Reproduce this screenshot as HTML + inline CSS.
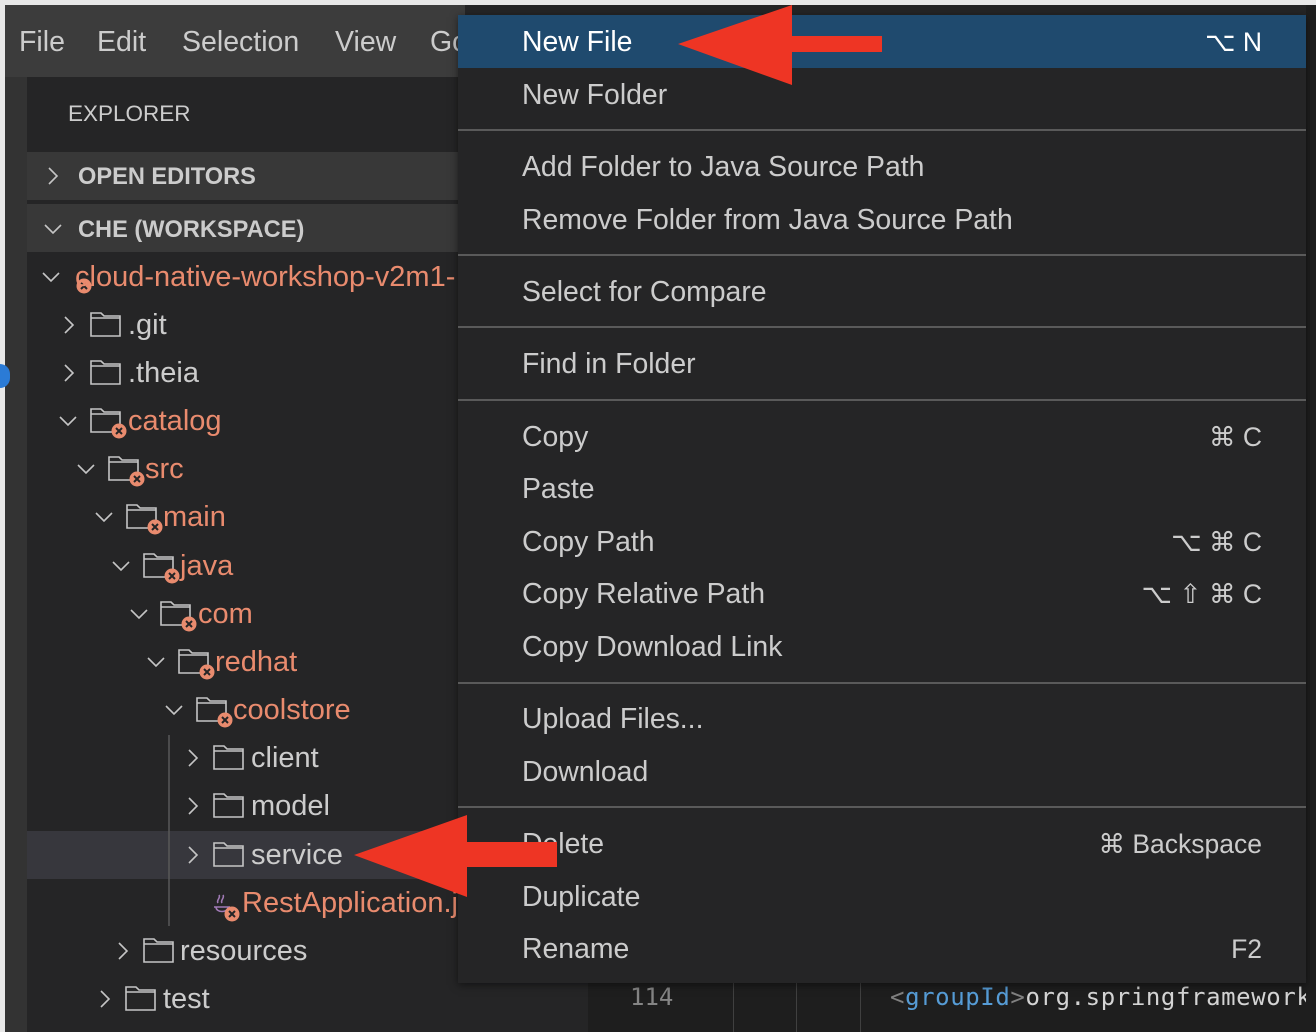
<!DOCTYPE html>
<html><head><meta charset="utf-8"><style>
*{margin:0;padding:0;box-sizing:border-box}
body{width:1316px;height:1032px;overflow:hidden;background:#e8e8e8;position:relative;font-family:"Liberation Sans","DejaVu Sans",sans-serif}
.a{position:absolute}
.t{position:absolute;font-size:29px;line-height:32px;white-space:nowrap;color:#cccccc;margin-top:1px}
.o{color:#e98b6e}
.mi{position:absolute;left:522px;font-size:28.4px;line-height:32px;color:#cccccc;white-space:nowrap;margin-top:1px}
.sc{position:absolute;right:54px;font-size:26.5px;line-height:32px;color:#cccccc;white-space:nowrap;font-family:"Liberation Sans","DejaVu Sans",sans-serif;margin-top:1px}
.sep{position:absolute;left:458px;width:848px;height:2px;background:#5a5a5a}
</style></head><body>
<div class="a" style="left:5px;top:5px;width:1311px;height:1027px;background:#252526"></div>
<div class="a" style="left:5px;top:5px;width:460px;height:72px;background:#3c3c3c"></div>
<div class="t" style="left:19px;top:25px;font-size:28.5px">File</div>
<div class="t" style="left:97px;top:25px;font-size:28.5px">Edit</div>
<div class="t" style="left:182px;top:25px;font-size:28.5px">Selection</div>
<div class="t" style="left:335px;top:25px;font-size:28.5px">View</div>
<div class="t" style="left:430px;top:25px;font-size:28.5px">Go</div>
<div class="a" style="left:5px;top:77px;width:22px;height:955px;background:#333333"></div>
<div class="a" style="left:0px;top:364px;width:10px;height:24px;border-radius:0 12px 12px 0;background:#2b7bd6"></div>
<div class="t" style="left:68px;top:97px;font-size:22.5px;">EXPLORER</div>
<div class="a" style="left:27px;top:152px;width:440px;height:48px;background:#383838"></div>
<div class="a" style="left:27px;top:204px;width:440px;height:48px;background:#383838"></div>
<div class="t" style="left:78px;top:160px;font-size:23.6px;font-weight:bold;">OPEN EDITORS</div>
<div class="t" style="left:78px;top:213px;font-size:23.6px;font-weight:bold;">CHE (WORKSPACE)</div>
<svg class="a" style="left:0;top:0" width="470" height="1032">
<defs>
<g id="fold"><path d="M1 1h10l3 3h16v20H1z M1 6h29" fill="none" stroke="#c5c5c5" stroke-width="1.6"/></g>
<g id="cr"><path d="M1 1l8 8-8 8" fill="none" stroke="#c5c5c5" stroke-width="1.6"/></g>
<g id="cd"><path d="M1 1l8 8 8-8" fill="none" stroke="#c5c5c5" stroke-width="1.6"/></g>
<g id="bd"><circle r="7.5" fill="#e98b6e"/><path d="M-3-3l6 6M3-3l-6 6" stroke="#252526" stroke-width="2"/></g>
</defs>
<use href="#cr" x="48" y="167"/>
<use href="#cd" x="44" y="224"/>
<rect x="27" y="831" width="440" height="48" fill="#37373d"/>
<line x1="169" y1="735" x2="169" y2="926" stroke="#585858" stroke-width="1.5"/>
<use href="#cd" x="42" y="272"/><use href="#bd" x="84" y="286"/>
<use href="#cr" x="64" y="316"/><use href="#fold" x="90" y="312"/>
<use href="#cr" x="64" y="364"/><use href="#fold" x="90" y="360"/>
<use href="#cd" x="59" y="416"/><use href="#fold" x="90" y="408"/><use href="#bd" x="119" y="431"/>
<use href="#cd" x="77" y="464"/><use href="#fold" x="108" y="456"/><use href="#bd" x="137" y="479"/>
<use href="#cd" x="95" y="512"/><use href="#fold" x="126" y="504"/><use href="#bd" x="155" y="527"/>
<use href="#cd" x="112" y="561"/><use href="#fold" x="143" y="553"/><use href="#bd" x="172" y="576"/>
<use href="#cd" x="130" y="609"/><use href="#fold" x="160" y="601"/><use href="#bd" x="189" y="624"/>
<use href="#cd" x="147" y="657"/><use href="#fold" x="178" y="649"/><use href="#bd" x="207" y="672"/>
<use href="#cd" x="165" y="705"/><use href="#fold" x="196" y="697"/><use href="#bd" x="225" y="720"/>
<use href="#cr" x="188" y="749"/><use href="#fold" x="213" y="745"/>
<use href="#cr" x="188" y="797"/><use href="#fold" x="213" y="793"/>
<use href="#cr" x="188" y="846"/><use href="#fold" x="213" y="842"/>
<g stroke="#a07ab5" fill="none" stroke-width="1.6"><path d="M214 907h16M216 907c0 6 12 6 12 0M218 903c-2-3 3-5 1-8M222 903c-2-3 3-5 1-8"/></g><use href="#bd" x="232" y="914"/>
<use href="#cr" x="118" y="942"/><use href="#fold" x="143" y="938"/>
<use href="#cr" x="100" y="990"/><use href="#fold" x="125" y="986"/>
</svg>
<div class="t o" style="left:75px;top:260px;">cloud-native-workshop-v2m1-</div>
<div class="t" style="left:128px;top:308px;">.git</div>
<div class="t" style="left:128px;top:356px;">.theia</div>
<div class="t o" style="left:128px;top:404px;">catalog</div>
<div class="t o" style="left:145px;top:452px;">src</div>
<div class="t o" style="left:163px;top:500px;">main</div>
<div class="t o" style="left:180px;top:549px;">java</div>
<div class="t o" style="left:198px;top:597px;">com</div>
<div class="t o" style="left:215px;top:645px;">redhat</div>
<div class="t o" style="left:233px;top:693px;">coolstore</div>
<div class="t" style="left:251px;top:741px;">client</div>
<div class="t" style="left:251px;top:789px;">model</div>
<div class="t" style="left:251px;top:838px;">service</div>
<div class="t o" style="left:242px;top:886px;">RestApplication.java</div>
<div class="t" style="left:180px;top:934px;">resources</div>
<div class="t" style="left:163px;top:982px;">test</div>
<div class="a" style="left:588px;top:983px;width:728px;height:49px;background:#1e1e1e"></div>
<div class="a" style="left:733px;top:983px;width:1px;height:49px;background:#404040"></div>
<div class="a" style="left:796px;top:983px;width:1px;height:49px;background:#404040"></div>
<div class="a" style="left:860px;top:983px;width:1px;height:49px;background:#404040"></div>
<div class="a" style="left:630px;top:981px;font-family:'DejaVu Sans Mono','Liberation Mono',monospace;font-size:24px;line-height:32px;color:#858585">114</div>
<div class="a" style="left:890px;top:981px;font-family:'DejaVu Sans Mono','Liberation Mono',monospace;font-size:24px;line-height:32px;color:#d4d4d4;white-space:nowrap;letter-spacing:0.6px"><span style="color:#808080">&lt;</span><span style="color:#569cd6">groupId</span><span style="color:#808080">&gt;</span>org.springframework</div>
<div class="a" style="left:1306px;top:5px;width:10px;height:1027px;background:#1e1e1e"></div>
<div class="a" style="left:458px;top:15px;width:848px;height:968px;background:#252526;box-shadow:0 2px 8px rgba(0,0,0,.5)"></div>
<div class="a" style="left:458px;top:15px;width:848px;height:53px;background:#1f4a6e"></div>
<div class="mi" style="top:25px;color:#fff">New File</div><div class="sc" style="top:25px;color:#fff">⌥ N</div>
<div class="mi" style="top:78px">New Folder</div>
<div class="sep" style="top:129px"></div>
<div class="mi" style="top:150px">Add Folder to Java Source Path</div>
<div class="mi" style="top:203px">Remove Folder from Java Source Path</div>
<div class="sep" style="top:254px"></div>
<div class="mi" style="top:275px">Select for Compare</div>
<div class="sep" style="top:326px"></div>
<div class="mi" style="top:347px">Find in Folder</div>
<div class="sep" style="top:399px"></div>
<div class="mi" style="top:420px">Copy</div><div class="sc" style="top:420px">⌘ C</div>
<div class="mi" style="top:472px">Paste</div>
<div class="mi" style="top:525px">Copy Path</div><div class="sc" style="top:525px">⌥ ⌘ C</div>
<div class="mi" style="top:577px">Copy Relative Path</div><div class="sc" style="top:577px">⌥ ⇧ ⌘ C</div>
<div class="mi" style="top:630px">Copy Download Link</div>
<div class="sep" style="top:682px"></div>
<div class="mi" style="top:702px">Upload Files...</div>
<div class="mi" style="top:755px">Download</div>
<div class="sep" style="top:806px"></div>
<div class="mi" style="top:827px">Delete</div><div class="sc" style="top:827px">⌘ Backspace</div>
<div class="mi" style="top:880px">Duplicate</div>
<div class="mi" style="top:932px">Rename</div><div class="sc" style="top:932px">F2</div>
<svg class="a" style="left:0;top:0" width="1316" height="1032">
<polygon points="678,44 792,5 792,36 882,36 882,52 792,52 792,85" fill="#ee3524"/>
<polygon points="354,855 467,815 467,842 557,842 557,867 467,867 467,897" fill="#ee3524"/>
</svg>
</body></html>
